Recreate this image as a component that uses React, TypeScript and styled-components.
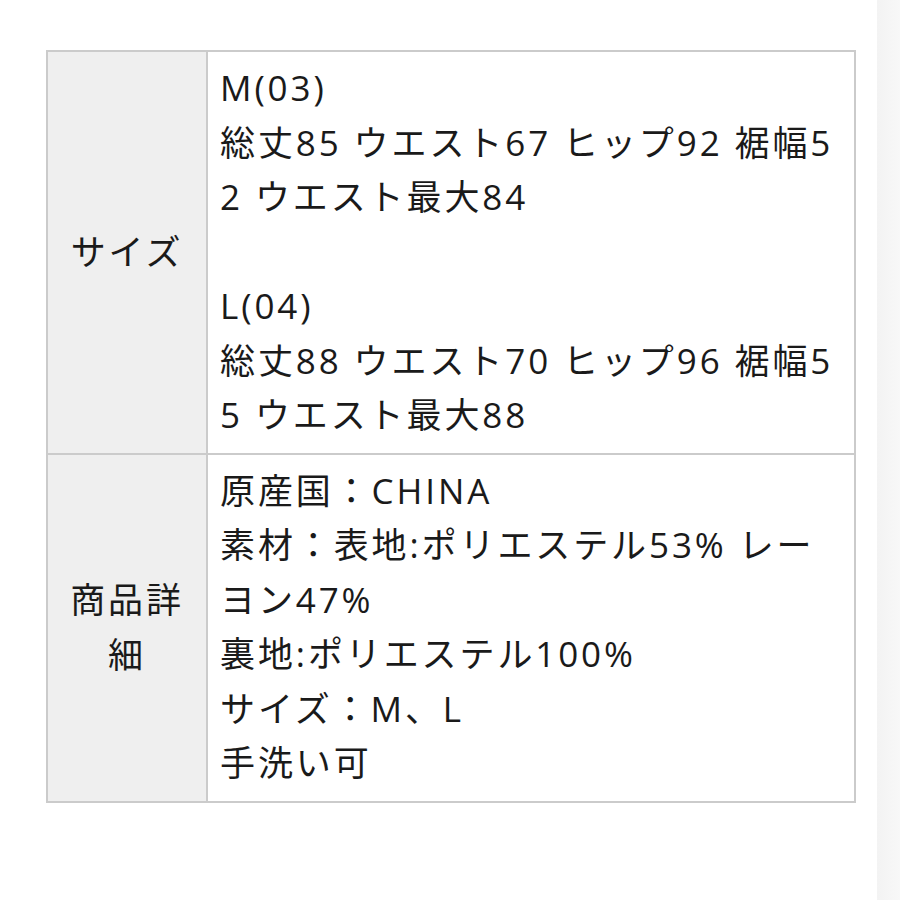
import styled, { createGlobalStyle } from 'styled-components';

const GlobalStyle = createGlobalStyle`
	html, body {
		margin: 0;
		padding: 0;
		background: #fff;
	}
	body {
		font-family: "Open Sans", "Noto Sans CJK JP", sans-serif;
		color: #1a1a1a;
	}
`;

const Page = styled.div`
	display: flex;
	width: 900px;
	min-height: 900px;
`;

const Main = styled.main`
	flex: 1;
	padding: 50px 0 0 46px;
`;

// faint scrollbar track at the right edge
const Track = styled.div`
	width: 23px;
	background: linear-gradient(to right, #f3f3f3, #f8f8f8);
`;

const SpecTable = styled.div`
	display: grid;
	grid-template-columns: 160px 1fr;
	width: 810px;
	box-sizing: border-box;
	border: 2px solid #cbcbcb;
	font-size: 35px;
	letter-spacing: 2.9px;
	line-height: 54.5px;
`;

const HeadCell = styled('div')<{ $divided?: boolean }>`
	display: flex;
	align-items: center;
	justify-content: center;
	text-align: center;
	padding: 0 18px;
	background: #efefef;
	border-right: 2px solid #cbcbcb;
	border-top: ${(p) => (p.$divided ? '2px solid #cbcbcb' : 'none')};
`;

const BodyCell = styled('div')<{ $divided?: boolean }>`
	padding: 9px 12px 10px;
	background: #fff;
	border-top: ${(p) => (p.$divided ? '2px solid #cbcbcb' : 'none')};
`;

const Line = styled.div`
	white-space: nowrap;
	min-height: 54.5px;
`;

const rows = [
	{
		head: 'サイズ',
		lines: [
			'M(03)',
			'総丈85 ウエスト67 ヒップ92 裾幅5',
			'2 ウエスト最大84',
			'',
			'L(04)',
			'総丈88 ウエスト70 ヒップ96 裾幅5',
			'5 ウエスト最大88',
		],
	},
	{
		head: '商品詳細',
		lines: [
			'原産国：CHINA',
			'素材：表地:ポリエステル53% レー',
			'ヨン47%',
			'裏地:ポリエステル100%',
			'サイズ：M、L',
			'手洗い可',
		],
	},
];

export default function App(): JSX.Element {
	return (
		<>
			<GlobalStyle />
			<Page>
				<Main>
					<SpecTable>
						{rows.map((row, i) => (
							<>
								<HeadCell key={'h' + i} $divided={i > 0}>
									{row.head}
								</HeadCell>
								<BodyCell key={'b' + i} $divided={i > 0}>
									{row.lines.map((l, j) => (
										<Line key={j}>{l}</Line>
									))}
								</BodyCell>
							</>
						))}
					</SpecTable>
				</Main>
				<Track />
			</Page>
		</>
	);
}
